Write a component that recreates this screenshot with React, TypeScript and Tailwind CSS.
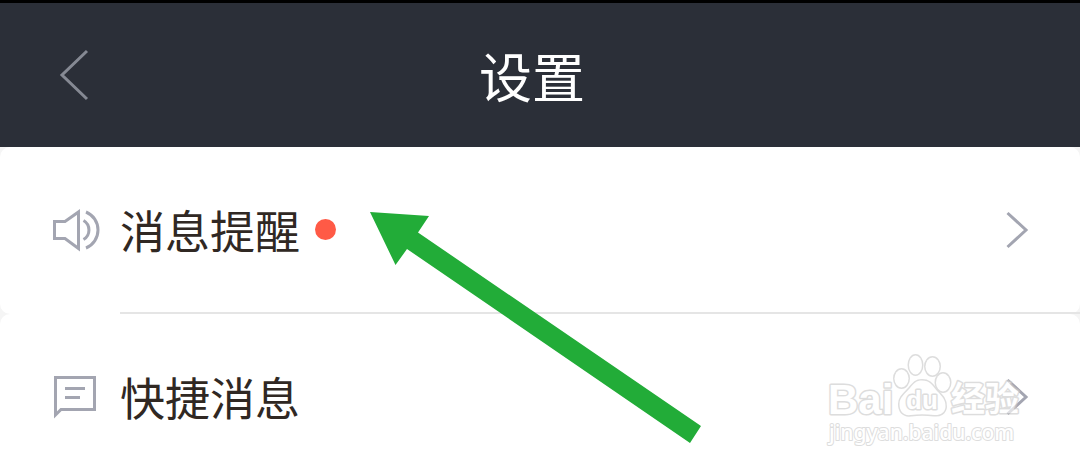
import type { ReactNode } from 'react';

interface SettingRowProps {
  icon: ReactNode;
  label: string;
  hasDot?: boolean;
  divider?: boolean;
}

function SpeakerIcon() {
  return (
    <svg className="w-12 h-12" viewBox="52 206 48 48" fill="none" stroke="#a3a5b1" strokeWidth="3" aria-hidden="true">
      <path d="M54.5 220.5H65L78.5 211V247.5L65 237.5H54.5Z" />
      <path d="M83.500 219.500A11 11 0 0 1 83.500 238.500" />
      <path d="M86 211A19.500 19.500 0 0 1 86 247" />
    </svg>
  );
}

function MessageIcon() {
  return (
    <svg className="w-12 h-12" viewBox="52 374 48 48" fill="none" stroke="#a3a5b1" strokeWidth="3" aria-hidden="true">
      <path d="M55.500 377.500H94.500V409.500H61L55.500 415Z" />
      <path d="M65 388.500H85M65 397.500H80" />
    </svg>
  );
}

function SettingRow({ icon, label, hasDot = false, divider = false }: SettingRowProps) {
  return (
    <button type="button" className="w-full h-[167px] flex items-center gap-5 pl-[52px] bg-white rounded-[10px] text-left">
      <span className="shrink-0">{icon}</span>
      <span
        className={`flex-1 self-stretch flex items-center pr-[51px] border-b-2 ${
          divider ? 'border-[#e5e5e5]' : 'border-transparent'
        }`}
      >
        <span className="text-[45px] leading-[60px] text-[#302823]">{label}</span>
        {hasDot && <span className="ml-[15px] size-[21px] rounded-full bg-[#ff5a46]" />}
        <svg className="ml-auto w-6 h-10" viewBox="0 0 24 40" fill="none" stroke="#a3a5b1" strokeWidth="3" aria-hidden="true">
          <path d="M2.500 3L21 20L2.500 37" />
        </svg>
      </span>
    </button>
  );
}

function Arrow() {
  return (
    <svg className="absolute left-[370px] top-[212px] w-[331px] h-[231px] pointer-events-none" viewBox="370 212 331 231" aria-hidden="true">
      <polygon points="370,212 429,216 418,232.500 701,426 690,443 407,249 395.500,265" fill="#22ac38" />
    </svg>
  );
}

function Watermark() {
  return (
    <svg
      className="absolute right-[50px] top-[350px] w-[206px] h-[100px] pointer-events-none opacity-65"
      viewBox="824 350 206 100"
      fill="#ffffff"
      stroke="#cccccc"
      strokeWidth="3"
      strokeLinejoin="round"
      paintOrder="stroke"
      fontFamily="'Liberation Sans', 'Noto Sans CJK SC', sans-serif"
    >
      <text x="828" y="414" fontSize="42" fontWeight="700">Bai</text>
      <ellipse cx="901.500" cy="378.500" rx="7" ry="9" />
      <ellipse cx="915.500" cy="365" rx="6.500" ry="9.500" />
      <ellipse cx="932.500" cy="366.500" rx="7" ry="9" />
      <ellipse cx="943" cy="382.500" rx="7" ry="9" />
      <path d="M922 380.500C930 380.500 932 385 937 391C942 396 946 400 945.500 407C945 413 940 415.500 934 415C926 414 918 414 911 415C903 416 899.500 411 899.500 404C899.500 397 905 394 910 388C914 383 916 380.500 922 380.500Z" />
      <text x="906" y="409" fontSize="26" fontWeight="700">du</text>
      <text x="951" y="411" fontSize="34" fontWeight="700">经验</text>
      <text x="829" y="440" fontSize="21" strokeWidth="2" fontFamily="'Noto Sans', sans-serif" fontWeight="500">jingyan.baidu.com</text>
    </svg>
  );
}

export default function App() {
  return (
    <div className="relative h-screen overflow-hidden bg-[#f5f5f5] font-['Noto_Sans_CJK_SC',sans-serif]">
      <header className="h-[147px] grid grid-cols-[120px_1fr_136px] items-center border-t-[3px] border-black bg-[#2b2f38]">
        <button type="button" aria-label="返回" className="pl-[58px]">
          <svg className="w-8 h-14" viewBox="0 0 32 56" fill="none" stroke="#858993" strokeWidth="3" aria-hidden="true">
            <path d="M29 4L4 28L29 52" />
          </svg>
        </button>
        <h1 className="text-center text-[53px] leading-[72px] text-white">设置</h1>
      </header>

      <main>
        <SettingRow icon={<SpeakerIcon />} label="消息提醒" hasDot divider />
        <SettingRow icon={<MessageIcon />} label="快捷消息" />
      </main>

      <Arrow />
      <Watermark />
    </div>
  );
}
